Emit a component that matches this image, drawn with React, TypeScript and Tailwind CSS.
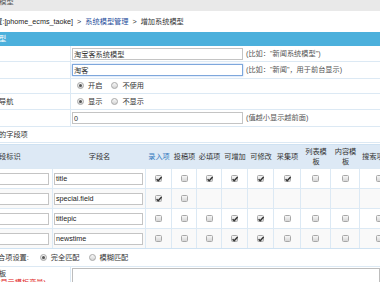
import React from 'react';

const FONT = { fontFamily: '"Liberation Sans", "Noto Sans CJK SC", sans-serif' };

function Check({ on }: { on?: boolean }) {
  return (
    <span className="relative inline-block w-[7px] h-[7px] rounded-[1.5px] border border-[#a8a8a8] bg-gradient-to-b from-[#f6f6f6] to-[#d6d6d6]">
      {on && (
        <svg viewBox="0 0 8 8" className="absolute left-[-1px] top-[-1px] w-[8px] h-[8px]">
          <path d="M1.6 4.2 L3.2 5.8 L6.6 2" stroke="#333" strokeWidth="1.4" fill="none" />
        </svg>
      )}
    </span>
  );
}

function Radio({ on }: { on?: boolean }) {
  return (
    <span className="relative inline-flex items-center justify-center w-[7px] h-[7px] rounded-full border border-[#a8a8a8] bg-gradient-to-b from-[#f8f8f8] to-[#d4d4d4]">
      {on && <span className="block w-[3px] h-[3px] rounded-full bg-[#555]" />}
    </span>
  );
}

function FormRow({ label, h, children }: { label?: React.ReactNode; h: string; children?: React.ReactNode }) {
  return (
    <div className={`flex border-b border-[#dce9f4] ${h}`}>
      <div className="w-[71px] shrink-0 border-r border-[#dce9f4] flex items-center overflow-hidden whitespace-nowrap">{label}</div>
      <div className="flex-1 flex items-center pl-[1px] whitespace-nowrap">{children}</div>
    </div>
  );
}

type Row = { id: string; name: string; checks: (boolean | null)[] };

const rows: Row[] = [
  { id: '', name: 'title', checks: [true, false, true, true, true, true, false, false, false] },
  { id: '', name: 'special.field', checks: [true, false, null, null, null, null, null, null, null] },
  { id: '', name: 'titlepic', checks: [false, false, false, true, true, false, false, false, false] },
  { id: '', name: 'newstime', checks: [false, false, false, true, true, false, false, false, false] },
];

const grid = 'grid grid-cols-[53px_93px_26px_25px_25px_26px_26px_27px_30px_29px_40px]';

export default function App() {
  return (
    <div className="w-[380px] h-[282px] overflow-hidden bg-white text-[7.2px] text-[#333] leading-none" style={FONT}>
      {/* top strip */}
      <div className="h-[11px] bg-[#e9e9e9] overflow-hidden">
        <div className="-ml-[8px] -mt-[2px] text-[#555] whitespace-nowrap">统模型</div>
      </div>

      {/* breadcrumb */}
      <div className="h-[21px] flex items-center whitespace-nowrap">
        <span className="-ml-[12px]">位置:</span>
        <span className="text-[#222]">[phome_ecms_taoke]</span>
        <span className="mx-[4px]">&gt;</span>
        <span className="text-[#1f4e9c]">系统模型管理</span>
        <span className="mx-[4px]">&gt;</span>
        <span>增加系统模型</span>
      </div>

      {/* title bar */}
      <div className="h-[14px] bg-[#4cb0dc] flex items-center text-white overflow-hidden whitespace-nowrap">
        <span className="-ml-[1px]">型</span>
      </div>

      <FormRow h="h-[16px]">
        <input readOnly value="淘宝客系统模型" className="w-[171px] h-[12px] border border-[#c4c4c4] px-[1px] text-[7.2px] text-[#333] outline-none" style={FONT} />
        <span className="ml-[3px] text-[#555]">(比如："新闻系统模型")</span>
      </FormRow>
      <FormRow h="h-[17px]">
        <input readOnly value="淘客" className="w-[171px] h-[12px] border border-[#7ea7dc] shadow-[0_0_2px_#a9c6ee] px-[1px] text-[7.2px] text-[#333] outline-none" style={FONT} />
        <span className="ml-[3px] text-[#555]">(比如："新闻"，用于前台显示)</span>
      </FormRow>
      <FormRow h="h-[15px]">
        <span className="ml-[5px] flex items-center gap-[4px]"><Radio on /><span>开启</span></span>
        <span className="ml-[9px] flex items-center gap-[4px]"><Radio /><span>不使用</span></span>
      </FormRow>
      <FormRow h="h-[16px]" label={<span className="-ml-[1px]">导航</span>}>
        <span className="ml-[5px] flex items-center gap-[4px]"><Radio on /><span>显示</span></span>
        <span className="ml-[9px] flex items-center gap-[4px]"><Radio /><span>不显示</span></span>
      </FormRow>
      <FormRow h="h-[17px]">
        <input readOnly value="0" className="w-[171px] h-[12px] border border-[#c4c4c4] px-[1px] text-[7.2px] text-[#333] outline-none" style={FONT} />
        <span className="ml-[3px] text-[#555]">(值越小显示越前面)</span>
      </FormRow>
      <div className="h-[16px] flex items-center border-b border-[#dce9f4] whitespace-nowrap">
        <span className="-ml-[1px]">的字段项</span>
      </div>

      {/* field table */}
      <div className="mt-[1px] border-t border-[#cfe2f2]">
        <div className={`${grid} h-[23px] bg-[#dde9f5] text-center`}>
          <div className="flex items-center justify-start whitespace-nowrap"><span className="-ml-[1px]">段标识</span></div>
          <div className="flex items-center justify-center">字段名</div>
          <div className="flex items-center justify-center text-[#3178bd]">录入项</div>
          <div className="flex items-center justify-center">投稿项</div>
          <div className="flex items-center justify-center">必填项</div>
          <div className="flex items-center justify-center">可增加</div>
          <div className="flex items-center justify-center">可修改</div>
          <div className="flex items-center justify-center">采集项</div>
          <div className="flex items-center justify-center leading-[10px]">列表模<br />板</div>
          <div className="flex items-center justify-center leading-[10px]">内容模<br />板</div>
          <div className="flex items-center justify-start pl-[2px] whitespace-nowrap">搜索项</div>
        </div>
        {rows.map((r, i) => (
          <div key={i} className={`${grid} h-[20px] border-t border-[#dce9f4] ${i % 2 ? 'bg-[#f9f9f9]' : 'bg-white'}`}>
            <div className="flex items-center border-r border-[#dce9f4] overflow-hidden">
              <span className="block w-[50px] h-[12px] border border-[#c4c4c4] bg-white -ml-[1px]" />
            </div>
            <div className="flex items-center border-r border-[#dce9f4] pl-[1px]">
              <span className="flex items-center w-[89px] h-[12px] border border-[#c4c4c4] bg-white px-[1px] text-[#222]">{r.name}</span>
            </div>
            {r.checks.map((c, j) => (
              <div key={j} className="flex items-center justify-center border-r border-[#dce9f4]">
                {c !== null && <Check on={c} />}
              </div>
            ))}
          </div>
        ))}
      </div>

      <div className="border-t border-[#cfe2f2] h-[18px] flex items-center whitespace-nowrap">
        <span className="-ml-[2px]">合项设置:</span>
        <span className="ml-[11px] flex items-center gap-[4px]"><Radio on /><span>完全匹配</span></span>
        <span className="ml-[9px] flex items-center gap-[4px]"><Radio /><span>模糊匹配</span></span>
      </div>

      <div className="flex border-t border-[#dce9f4] h-[30px]">
        <div className="w-[71px] shrink-0 border-r border-[#dce9f4] pt-[3px] whitespace-nowrap overflow-hidden">
          <div className="-ml-[1px]">板</div>
          <div className="mt-[2px] -ml-[2px] text-[#e02020]">(显示模板变量)</div>
        </div>
        <div className="flex-1 pl-[1px] pt-[1px]">
          <div className="h-[40px] border border-[#bdbdbd] bg-white" />
        </div>
      </div>
    </div>
  );
}
